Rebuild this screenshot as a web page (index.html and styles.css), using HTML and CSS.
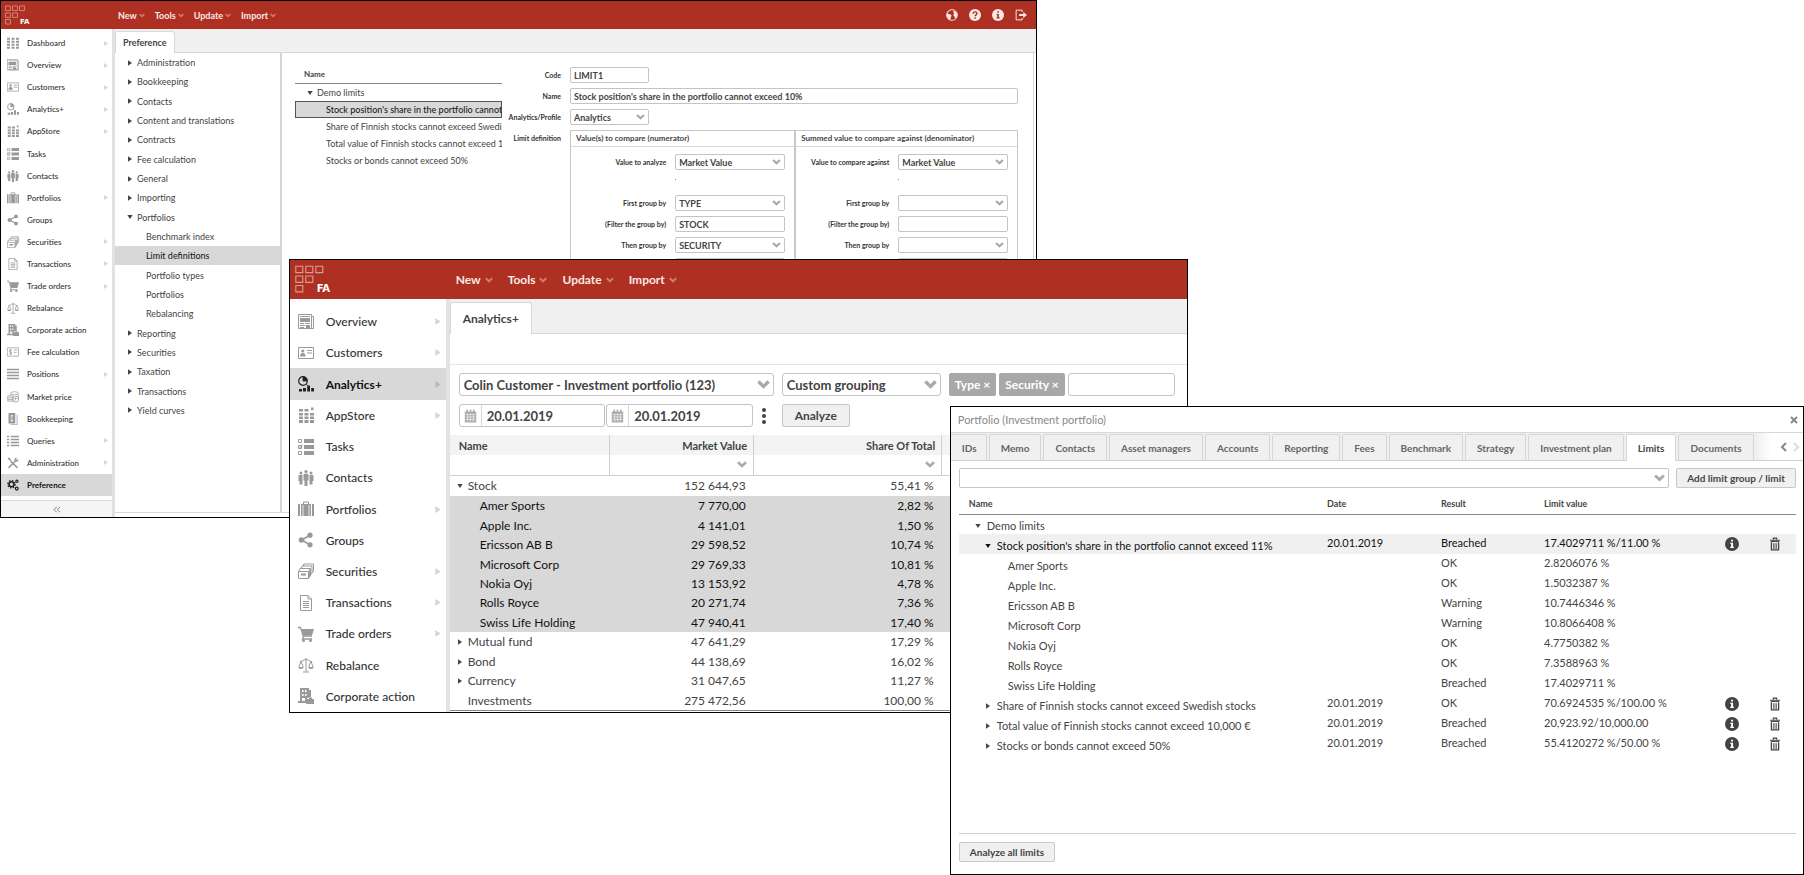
FILE: index.html
```html
<!DOCTYPE html>
<html lang="en">
<head>
<meta charset="utf-8">
<title>FA - Limits</title>
<link rel="stylesheet" href="styles.css">
</head>
<body>
<svg class="sprite" aria-hidden="true">
  <symbol id="chev" viewBox="0 0 10 7"><path d="M1 1.200 5 5l4-3.800" fill="none" stroke="currentColor" stroke-width="2.600"/></symbol>
  <symbol id="right" viewBox="0 0 6 8"><path d="M0 0l6 4-6 4z" fill="currentColor"/></symbol>
  <symbol id="down" viewBox="0 0 8 6"><path d="M0 0h8L4 6z" fill="currentColor"/></symbol>
  <symbol id="logo" viewBox="0 0 30 28"><g fill="none" stroke="currentColor" stroke-width="1.1"><path d="M.8 1.2h7v6.400h-7zM10.800 1.200h7v6.400h-7zM20.800 1.200h7v6.400h-7zM.8 11h7v6.400h-7zM10.800 11h7v6.400h-7zM.8 20.500h7v6.400h-7z"/></g></symbol>
  <symbol id="dashboard" viewBox="0 0 16 16"><path d="M0 1h4v2.500H0zM6 1h4v2.500H6zM12 1h4v2.500h-4zM0 5h4v2.500H0zM6 5h4v2.500H6zM12 5h4v2.500h-4zM0 9h4v2.500H0zM6 9h4v2.500H6zM12 9h4v2.500h-4zM0 13h4v2.500H0zM6 13h4v2.500H6zM12 13h4v2.500h-4z" fill="currentColor"/></symbol>
  <symbol id="overview" viewBox="0 0 16 16"><path d="M.5.500h13v14H.5zM13.500 2.500h2v12h-13" fill="none" stroke="currentColor"/><path d="M2 2h10v1H2zM2 4h10v4H2zM2 9h4v1H2zM7 9h5v1H7zM2 11h5v1H2zM8 11h4v3H8zM2 13h4v1H2z" fill="currentColor"/></symbol>
  <symbol id="customers" viewBox="0 0 16 16"><path d="M.5 2.500h15v11H.5z" fill="none" stroke="currentColor"/><circle cx="4.800" cy="6" r="1.600" fill="currentColor"/><path d="M2 11.500c0-2.500 1-3.500 2.800-3.500s2.800 1 2.800 3.500zM9 5h5v1H9zM9 7.500h5v1H9z" fill="currentColor"/></symbol>
  <symbol id="analytics" viewBox="0 0 16 16"><circle cx="5" cy="5" r="4.300" fill="none" stroke="currentColor" stroke-width="1.200"/><path d="M5 5V1a4 4 0 0 1 4 4zM8 8l3 3" fill="currentColor" stroke="currentColor" stroke-width=".8"/><path d="M1 13h3v2.500H1zM5 12h3v3.500H5zM9.200 9.500H12v6H9.200zM13.200 12H16v3.500h-2.800z" fill="currentColor"/></symbol>
  <symbol id="appstore" viewBox="0 0 16 16"><path d="M1 2h4v2.500H1zM6.500 2h4v2.500h-4zM13 .500h2.500V3H13zM1 6h4v2.500H1zM6.500 6h4v2.500h-4zM12 6h4v2.500h-4zM1 9.500h4V12H1zM6.500 9.500h4V12h-4zM12 9.500h4V12h-4zM1 13h4v3H1zM6.500 13h4v3h-4zM12 13h4v3h-4z" fill="currentColor"/></symbol>
  <symbol id="tasks" viewBox="0 0 16 16"><path d="M.5.500h3v3h-3zM.5 6.500h3v3h-3zM.5 12.500h3v3h-3zM1 7.500l1 1 2.500-3" fill="none" stroke="currentColor"/><path d="M6 0h10v4H6zM6 6h10v4H6zM6 12h10v4H6z" fill="currentColor"/></symbol>
  <symbol id="contacts" viewBox="0 0 16 16"><g fill="currentColor"><circle cx="3" cy="3" r="1.500"/><circle cx="8" cy="1.600" r="1.600"/><circle cx="13" cy="3" r="1.500"/><path d="M.5 6q0-1 1-1h3v9.500h-3V11H.5zM5.500 5q0-1.200 1-1.200h3q1 0 1 1.200v5.500h-1V16h-3v-5.500h-1zM11.500 5h3q1 0 1 1v5h-1v3.500h-3z"/></g></symbol>
  <symbol id="portfolios" viewBox="0 0 16 16"><path d="M0 3h2v12H0zM3 3h10v12H3zM14 3h2v12h-2z" fill="currentColor"/><path d="M5.500 3V1h5v2M5.500 4v10M10.500 4v10" fill="none" stroke="currentColor"/><path d="M5 4v11M11 4v11" stroke="#fff" stroke-width=".8"/></symbol>
  <symbol id="groups" viewBox="0 0 16 16"><g fill="currentColor"><circle cx="3.500" cy="8" r="2.800"/><circle cx="12" cy="3.200" r="2.600"/><circle cx="12" cy="12.800" r="2.600"/></g><path d="M12 3.200 3.500 8l8.500 4.800" fill="none" stroke="currentColor" stroke-width="1.600"/></symbol>
  <symbol id="securities" viewBox="0 0 16 16"><g fill="none" stroke="currentColor"><path d="M.5 8.500h10v7H.5zM.5 8.500 2 5.500h10.500l-2 3M12.500 5.500v7l-2 3M3 5.500l1-2.500h10v7l-1.500 2M5 3l.8-2H15.500v7L14 10"/></g><path d="M3 10.500h5v2H3zM11 9l1.500-3v6L11 15z" fill="currentColor"/></symbol>
  <symbol id="transactions" viewBox="0 0 16 16"><path d="M2.500.500h7.500l3.500 3.500v11.500h-11zM10 .500V4h3.500M5 6.500h6M5 8.500h6M5 10.500h6M5 12.500h6" fill="none" stroke="currentColor"/></symbol>
  <symbol id="cart" viewBox="0 0 16 16"><path d="M0 1.500h2.500l3 9.500-1 2H14M5 10h9" fill="none" stroke="currentColor" stroke-width="1.300"/><path d="M3.500 3H16l-2 6.500H5.500z" fill="currentColor"/><circle cx="5.500" cy="14.500" r="1.500" fill="currentColor"/><circle cx="12.500" cy="14.500" r="1.500" fill="currentColor"/></symbol>
  <symbol id="rebalance" viewBox="0 0 16 16"><path d="M8 1v13.500M5 15h6M2 4.500c3 0 3-2 6-2s3 2 6 2M3 4.500.8 10M3 4.500 5.300 10M13 4.500 10.700 10M13 4.500l2.200 5.500" fill="none" stroke="currentColor"/><path d="M.3 10h5.400a2.700 2 0 0 1-5.400 0zM10.300 10h5.400a2.700 2 0 0 1-5.400 0z" fill="currentColor"/></symbol>
  <symbol id="corporate" viewBox="0 0 16 16"><path fill-rule="evenodd" d="M2 0h9v2h2v7h-2v1H9v5H0v-2h2zM4 2v2h1.500V2zM7 2v2h1.500V2zM4 6v2h1.500V6zM7 6v2h1.500V6zM4 10v3h3v-3z" fill="currentColor"/><path d="M9 11h7v5H8v-5zM11 9.500h3v2h-3z" fill="currentColor"/></symbol>
  <symbol id="fee" viewBox="0 0 16 16"><path d="M.5 2.500h15v11H.5zM9 5.500h5M9 8.500h4M6.500 5.500H4Q3 5.500 3 6.700T4.500 8t2 1.200-1.500 1.300H3M4.800 4v8" fill="none" stroke="currentColor"/></symbol>
  <symbol id="positions" viewBox="0 0 16 16"><path d="M0 1h16v2H0zM0 5h16v2H0zM0 9h16v2H0zM0 13h16v2H0z" fill="currentColor"/></symbol>
  <symbol id="market" viewBox="0 0 16 16"><g fill="none" stroke="currentColor"><ellipse cx="10" cy="3" rx="5" ry="2"/><path d="M5 3v3M15 3v9M1 6.500h7v7H1zM1 9h7M1 11.500h7"/><circle cx="11.500" cy="11" r="4"/><path d="M11.500 8.500V13M10 10h3"/></g></symbol>
  <symbol id="book" viewBox="0 0 16 16"><path fill-rule="evenodd" d="M2 0h9v14H2zM5 3v1.500h3V3zM5 6v1.200h2V6zM5 9v2h3V9z" fill="currentColor"/><path d="M13.500 2v13.500H5" fill="none" stroke="currentColor"/></symbol>
  <symbol id="queries" viewBox="0 0 16 16"><path d="M0 1h3v2H0zM5 1h11v2H5zM0 5h3v2H0zM5 5h11v2H5zM0 9h3v2H0zM5 9h11v2H5zM0 13h3v2H0zM5 13h11v2H5z" fill="currentColor"/></symbol>
  <symbol id="admin" viewBox="0 0 16 16"><path d="M4.500 5 14 14.500M10.500 6 2 14.500" stroke="currentColor" stroke-width="2"/><path d="M1 1.500l2-.8 2.500 3-1.200 1.500L1.500 3zM10 5.500c-1-2.500 1-5 3.500-4.800L12 2.500l1.500 1.500L15.500 2.500C16 5 13.500 7 11 6.500z" fill="currentColor"/></symbol>
  <symbol id="gears" viewBox="0 0 16 16"><g fill="none" stroke="currentColor"><circle cx="6" cy="7" r="3.300" stroke-width="2.200"/><circle cx="6" cy="7" r="5" stroke-width="1.600" stroke-dasharray="2 1.920"/><circle cx="13.200" cy="3" r="1.500" stroke-width="1.500"/><circle cx="13" cy="12.800" r="1.900" stroke-width="1.600"/></g></symbol>
  <symbol id="globe" viewBox="0 0 16 16"><circle cx="8" cy="8" r="7.200" fill="none" stroke="currentColor" stroke-width="1.200"/><path d="M7 1 4.500 2.500 2 6l1.500 1L5 6.500 7.500 8.500 6.500 11 5.500 15C2.500 14 1 11 1 8s2-6.500 6-7zM10 2l4 2.500 1 3.500-1 3.500-2 1-1-3-1.500-1.500L11 5.500 9.500 4z" fill="currentColor"/></symbol>
  <symbol id="help" viewBox="0 0 16 16"><circle cx="8" cy="8" r="8" fill="currentColor"/><path d="M5.500 6.300C5.500 3 10.600 3 10.600 6c0 1.800-2.500 1.900-2.500 3.800M8.100 11v2" fill="none" stroke="#ae3022" stroke-width="1.900"/></symbol>
  <symbol id="info" viewBox="0 0 16 16"><circle cx="8" cy="8" r="8" fill="currentColor"/><path d="M7 3h2.200v2H7zM6 6.500h3.200V11h1v1.500H6V11h1V8H6z" class="cutout"/></symbol>
  <symbol id="logout" viewBox="0 0 16 16"><path d="M9.500 4V1.500h-8v13h8V12" fill="none" stroke="currentColor" stroke-width="1.300"/><path d="M5.500 6.800H11V4l5 4-5 4V9.200H5.500z" fill="currentColor"/></symbol>
  <symbol id="calendar" viewBox="0 0 16 16"><path d="M1 2.500h14V16H1z" fill="currentColor"/><path d="M4 0v4M12 0v4M8 0v3" stroke="currentColor" stroke-width="1.800"/><path d="M2 6.200h12M2 9.200h12M2 12.200h12M4.500 5v10M8 5v10M11.500 5v10" stroke="#fff" stroke-width=".7"/></symbol>
  <symbol id="trash" viewBox="0 0 12 16"><path d="M4 2.500V1h4v1.500M0 3.500h12M1 5h10" fill="none" stroke="currentColor" stroke-width="1.400"/><path d="M1.700 6v9h8.600V6" fill="none" stroke="currentColor" stroke-width="1.600"/><path d="M4.300 7v7M6 7v7M7.700 7v7" stroke="currentColor" stroke-width=".9"/></symbol>
</svg>
<main class="desktop">

<section class="window win-pref" aria-label="Preference">
  <header class="topbar">
    <div class="logo"><svg><use href="#logo"/></svg><span>FA</span></div>
    <nav class="menu">
      <button>New<svg><use href="#chev"/></svg></button><button>Tools<svg><use href="#chev"/></svg></button><button>Update<svg><use href="#chev"/></svg></button><button>Import<svg><use href="#chev"/></svg></button>
    </nav>
    <div class="actions">
      <button aria-label="Language"><svg><use href="#globe"/></svg></button><button aria-label="Help"><svg><use href="#help"/></svg></button><button aria-label="Info"><svg><use href="#info"/></svg></button><button aria-label="Log out"><svg><use href="#logout"/></svg></button>
    </div>
  </header>
  <div class="body">
    <aside class="sidebar">
      <ul>
        <li><svg class="ico"><use href="#dashboard"/></svg><a href="#">Dashboard</a><svg class="more"><use href="#right"/></svg></li>
        <li><svg class="ico"><use href="#overview"/></svg><a href="#">Overview</a><svg class="more"><use href="#right"/></svg></li>
        <li><svg class="ico"><use href="#customers"/></svg><a href="#">Customers</a><svg class="more"><use href="#right"/></svg></li>
        <li><svg class="ico"><use href="#analytics"/></svg><a href="#">Analytics+</a><svg class="more"><use href="#right"/></svg></li>
        <li><svg class="ico"><use href="#appstore"/></svg><a href="#">AppStore</a><svg class="more"><use href="#right"/></svg></li>
        <li><svg class="ico"><use href="#tasks"/></svg><a href="#">Tasks</a></li>
        <li><svg class="ico"><use href="#contacts"/></svg><a href="#">Contacts</a></li>
        <li><svg class="ico"><use href="#portfolios"/></svg><a href="#">Portfolios</a><svg class="more"><use href="#right"/></svg></li>
        <li><svg class="ico"><use href="#groups"/></svg><a href="#">Groups</a></li>
        <li><svg class="ico"><use href="#securities"/></svg><a href="#">Securities</a><svg class="more"><use href="#right"/></svg></li>
        <li><svg class="ico"><use href="#transactions"/></svg><a href="#">Transactions</a><svg class="more"><use href="#right"/></svg></li>
        <li><svg class="ico"><use href="#cart"/></svg><a href="#">Trade orders</a><svg class="more"><use href="#right"/></svg></li>
        <li><svg class="ico"><use href="#rebalance"/></svg><a href="#">Rebalance</a></li>
        <li><svg class="ico"><use href="#corporate"/></svg><a href="#">Corporate action</a></li>
        <li><svg class="ico"><use href="#fee"/></svg><a href="#">Fee calculation</a></li>
        <li><svg class="ico"><use href="#positions"/></svg><a href="#">Positions</a><svg class="more"><use href="#right"/></svg></li>
        <li><svg class="ico"><use href="#market"/></svg><a href="#">Market price</a></li>
        <li><svg class="ico"><use href="#book"/></svg><a href="#">Bookkeeping</a></li>
        <li><svg class="ico"><use href="#queries"/></svg><a href="#">Queries</a><svg class="more"><use href="#right"/></svg></li>
        <li><svg class="ico"><use href="#admin"/></svg><a href="#">Administration</a><svg class="more"><use href="#right"/></svg></li>
        <li class="on"><svg class="ico"><use href="#gears"/></svg><a href="#">Preference</a></li>
      </ul>
      <button class="collapse" aria-label="Collapse menu"><svg viewBox="0 0 12 10"><path d="M5.500 1 1.500 5l4 4M10.500 1l-4 4 4 4" fill="none" stroke="currentColor" stroke-width="1.400"/></svg></button>
    </aside>
    <div class="content">
      <div class="tabbar"><button class="tab on">Preference</button></div>
      <div class="panes">
        <ul class="tree">
          <li><svg class="tri r"><use href="#right"/></svg>Administration</li>
          <li><svg class="tri r"><use href="#right"/></svg>Bookkeeping</li>
          <li><svg class="tri r"><use href="#right"/></svg>Contacts</li>
          <li><svg class="tri r"><use href="#right"/></svg>Content and translations</li>
          <li><svg class="tri r"><use href="#right"/></svg>Contracts</li>
          <li><svg class="tri r"><use href="#right"/></svg>Fee calculation</li>
          <li><svg class="tri r"><use href="#right"/></svg>General</li>
          <li><svg class="tri r"><use href="#right"/></svg>Importing</li>
          <li><svg class="tri d"><use href="#down"/></svg>Portfolios</li>
          <li class="sub">Benchmark index</li>
          <li class="sub on">Limit definitions</li>
          <li class="sub">Portfolio types</li>
          <li class="sub">Portfolios</li>
          <li class="sub">Rebalancing</li>
          <li><svg class="tri r"><use href="#right"/></svg>Reporting</li>
          <li><svg class="tri r"><use href="#right"/></svg>Securities</li>
          <li><svg class="tri r"><use href="#right"/></svg>Taxation</li>
          <li><svg class="tri r"><use href="#right"/></svg>Transactions</li>
          <li><svg class="tri r"><use href="#right"/></svg>Yield curves</li>
        </ul>
        <div class="editor">
          <div class="limits">
            <h2>Name</h2>
            <ul>
              <li class="group"><svg class="tri d"><use href="#down"/></svg>Demo limits</li>
              <li class="on">Stock position's share in the portfolio cannot exceed 10%</li>
              <li>Share of Finnish stocks cannot exceed Swedish stocks</li>
              <li>Total value of Finnish stocks cannot exceed 10,000 €</li>
              <li>Stocks or bonds cannot exceed 50%</li>
            </ul>
          </div>
          <form class="form">
            <label for="code">Code</label><input id="code" class="field short" value="LIMIT1">
            <label for="name">Name</label><input id="name" class="field" value="Stock position's share in the portfolio cannot exceed 10%">
            <label for="prof">Analytics/Profile</label>
            <div class="select short"><select id="prof" class="field"><option>Analytics</option></select><svg><use href="#chev"/></svg></div>
            <span class="lab">Limit definition</span>
            <div class="compare">
              <fieldset>
                <h3>Value(s) to compare (numerator)</h3>
                <div class="pairs">
                  <label for="a1">Value to analyze</label><div class="select"><select id="a1" class="field"><option>Market Value</option></select><svg><use href="#chev"/></svg></div>
                  <i class="dot"></i>
                  <label for="a2">First group by</label><div class="select"><select id="a2" class="field"><option>TYPE</option></select><svg><use href="#chev"/></svg></div>
                  <label for="a3">(Filter the group by)</label><input id="a3" class="field" value="STOCK">
                  <label for="a4">Then group by</label><div class="select"><select id="a4" class="field"><option>SECURITY</option></select><svg><use href="#chev"/></svg></div>
                  <span></span><input class="field" aria-label="Filter">
                </div>
              </fieldset>
              <fieldset>
                <h3>Summed value to compare against (denominator)</h3>
                <div class="pairs">
                  <label for="b1">Value to compare against</label><div class="select"><select id="b1" class="field"><option>Market Value</option></select><svg><use href="#chev"/></svg></div>
                  <i class="dot"></i>
                  <label for="b2">First group by</label><div class="select"><select id="b2" class="field"><option></option></select><svg><use href="#chev"/></svg></div>
                  <label for="b3">(Filter the group by)</label><input id="b3" class="field">
                  <label for="b4">Then group by</label><div class="select"><select id="b4" class="field"><option></option></select><svg><use href="#chev"/></svg></div>
                  <span></span><input class="field" aria-label="Filter">
                </div>
              </fieldset>
            </div>
          </form>
        </div>
      </div>
    </div>
  </div>
</section>

<section class="window win-ana" aria-label="Analytics">
  <header class="topbar">
    <div class="logo"><svg><use href="#logo"/></svg><span>FA</span></div>
    <nav class="menu">
      <button>New<svg><use href="#chev"/></svg></button><button>Tools<svg><use href="#chev"/></svg></button><button>Update<svg><use href="#chev"/></svg></button><button>Import<svg><use href="#chev"/></svg></button>
    </nav>
  </header>
  <div class="body">
    <aside class="sidebar">
      <ul>
        <li><svg class="ico"><use href="#overview"/></svg><a href="#">Overview</a><svg class="more"><use href="#right"/></svg></li>
        <li><svg class="ico"><use href="#customers"/></svg><a href="#">Customers</a><svg class="more"><use href="#right"/></svg></li>
        <li class="on"><svg class="ico"><use href="#analytics"/></svg><a href="#">Analytics+</a><svg class="more"><use href="#right"/></svg></li>
        <li><svg class="ico"><use href="#appstore"/></svg><a href="#">AppStore</a><svg class="more"><use href="#right"/></svg></li>
        <li><svg class="ico"><use href="#tasks"/></svg><a href="#">Tasks</a></li>
        <li><svg class="ico"><use href="#contacts"/></svg><a href="#">Contacts</a></li>
        <li><svg class="ico"><use href="#portfolios"/></svg><a href="#">Portfolios</a><svg class="more"><use href="#right"/></svg></li>
        <li><svg class="ico"><use href="#groups"/></svg><a href="#">Groups</a></li>
        <li><svg class="ico"><use href="#securities"/></svg><a href="#">Securities</a><svg class="more"><use href="#right"/></svg></li>
        <li><svg class="ico"><use href="#transactions"/></svg><a href="#">Transactions</a><svg class="more"><use href="#right"/></svg></li>
        <li><svg class="ico"><use href="#cart"/></svg><a href="#">Trade orders</a><svg class="more"><use href="#right"/></svg></li>
        <li><svg class="ico"><use href="#rebalance"/></svg><a href="#">Rebalance</a></li>
        <li><svg class="ico"><use href="#corporate"/></svg><a href="#">Corporate action</a></li>
      </ul>
    </aside>
    <div class="content">
      <div class="tabbar"><button class="tab on">Analytics+</button></div>
      <div class="spacer"></div>
      <div class="controls">
        <div class="line">
          <div class="select portfolio"><select class="field" aria-label="Portfolio"><option>Colin Customer - Investment portfolio (123)</option></select><svg><use href="#chev"/></svg></div>
          <div class="select grouping"><select class="field" aria-label="Grouping"><option>Custom grouping</option></select><svg><use href="#chev"/></svg></div>
          <div class="tokens"><button>Type ×</button><button>Security ×</button><input class="field" aria-label="Add group"></div>
        </div>
        <div class="line">
          <div class="dates">
            <div class="date"><svg><use href="#calendar"/></svg><input aria-label="From" value="20.01.2019"></div>
            <div class="date"><svg><use href="#calendar"/></svg><input aria-label="To" value="20.01.2019"></div>
            <button class="kebab" aria-label="More options"><svg viewBox="0 0 4 16"><circle cx="2" cy="2" r="2"/><circle cx="2" cy="8" r="2"/><circle cx="2" cy="14" r="2"/></svg></button>
          </div>
          <button class="btn">Analyze</button>
        </div>
      </div>
      <table class="grid">
        <colgroup><col class="c1"><col class="c2"><col class="c3"><col></colgroup>
        <thead>
          <tr><th>Name</th><th class="num">Market Value</th><th class="num">Share Of Total</th><th></th></tr>
          <tr class="filter"><td></td><td class="num"><svg><use href="#chev"/></svg></td><td class="num"><svg><use href="#chev"/></svg></td><td></td></tr>
        </thead>
        <tbody>
          <tr class="first"><td><svg class="tri d"><use href="#down"/></svg>Stock</td><td class="num">152 644,93</td><td class="num">55,41 %</td><td></td></tr>
          <tr class="hl"><td class="sub">Amer Sports</td><td class="num">7 770,00</td><td class="num">2,82 %</td><td></td></tr>
          <tr class="hl"><td class="sub">Apple Inc.</td><td class="num">4 141,01</td><td class="num">1,50 %</td><td></td></tr>
          <tr class="hl"><td class="sub">Ericsson AB B</td><td class="num">29 598,52</td><td class="num">10,74 %</td><td></td></tr>
          <tr class="hl"><td class="sub">Microsoft Corp</td><td class="num">29 769,33</td><td class="num">10,81 %</td><td></td></tr>
          <tr class="hl"><td class="sub">Nokia Oyj</td><td class="num">13 153,92</td><td class="num">4,78 %</td><td></td></tr>
          <tr class="hl"><td class="sub">Rolls Royce</td><td class="num">20 271,74</td><td class="num">7,36 %</td><td></td></tr>
          <tr class="hl"><td class="sub">Swiss Life Holding</td><td class="num">47 940,41</td><td class="num">17,40 %</td><td></td></tr>
          <tr><td><svg class="tri r"><use href="#right"/></svg>Mutual fund</td><td class="num">47 641,29</td><td class="num">17,29 %</td><td></td></tr>
          <tr><td><svg class="tri r"><use href="#right"/></svg>Bond</td><td class="num">44 138,69</td><td class="num">16,02 %</td><td></td></tr>
          <tr><td><svg class="tri r"><use href="#right"/></svg>Currency</td><td class="num">31 047,65</td><td class="num">11,27 %</td><td></td></tr>
          <tr><td class="total">Investments</td><td class="num">275 472,56</td><td class="num">100,00 %</td><td></td></tr>
        </tbody>
      </table>
    </div>
  </div>
</section>

<section class="window win-port" aria-label="Portfolio">
  <header class="title"><h1>Portfolio (Investment portfolio)</h1><button aria-label="Close"><svg viewBox="0 0 8 8"><path d="M1 1l6 6M7 1 1 7" stroke="currentColor" stroke-width="2"/></svg></button></header>
  <div class="tabs">
    <button>IDs</button><button>Memo</button><button>Contacts</button><button>Asset managers</button><button>Accounts</button><button>Reporting</button><button>Fees</button><button>Benchmark</button><button>Strategy</button><button>Investment plan</button><button class="on">Limits</button><button>Documents</button>
    <div class="scroll"><button aria-label="Previous tabs"><svg viewBox="0 0 7 10"><path d="M6 1 2 5l4 4" fill="none" stroke="#888" stroke-width="2"/></svg></button><button aria-label="Next tabs"><svg viewBox="0 0 7 10"><path d="M1 1l4 4-4 4" fill="none" stroke="#ddd" stroke-width="2"/></svg></button></div>
  </div>
  <div class="pane">
    <div class="add">
      <div class="select"><select class="field" aria-label="Limit"><option></option></select><svg><use href="#chev"/></svg></div>
      <button class="btn">Add limit group / limit</button>
    </div>
    <table class="results">
      <colgroup><col><col class="day"><col class="res"><col class="val"><col class="act"><col class="act"></colgroup>
      <thead><tr><th>Name</th><th>Date</th><th>Result</th><th>Limit value</th><th></th><th></th></tr></thead>
      <tbody>
        <tr><td class="name l0"><svg class="tri d"><use href="#down"/></svg>Demo limits</td><td></td><td></td><td></td><td></td><td></td></tr>
        <tr class="hl"><td class="name l1"><svg class="tri d"><use href="#down"/></svg>Stock position's share in the portfolio cannot exceed 11%</td><td>20.01.2019</td><td>Breached</td><td>17.4029711 %/11.00 %</td><td class="icon"><button aria-label="Info"><svg class="inf"><use href="#info"/></svg></button></td><td class="icon"><button aria-label="Delete"><svg class="tra"><use href="#trash"/></svg></button></td></tr>
        <tr><td class="name l2">Amer Sports</td><td></td><td>OK</td><td>2.8206076 %</td><td></td><td></td></tr>
        <tr><td class="name l2">Apple Inc.</td><td></td><td>OK</td><td>1.5032387 %</td><td></td><td></td></tr>
        <tr><td class="name l2">Ericsson AB B</td><td></td><td>Warning</td><td>10.7446346 %</td><td></td><td></td></tr>
        <tr><td class="name l2">Microsoft Corp</td><td></td><td>Warning</td><td>10.8066408 %</td><td></td><td></td></tr>
        <tr><td class="name l2">Nokia Oyj</td><td></td><td>OK</td><td>4.7750382 %</td><td></td><td></td></tr>
        <tr><td class="name l2">Rolls Royce</td><td></td><td>OK</td><td>7.3588963 %</td><td></td><td></td></tr>
        <tr><td class="name l2">Swiss Life Holding</td><td></td><td>Breached</td><td>17.4029711 %</td><td></td><td></td></tr>
        <tr><td class="name l1"><svg class="tri r"><use href="#right"/></svg>Share of Finnish stocks cannot exceed Swedish stocks</td><td>20.01.2019</td><td>OK</td><td>70.6924535 %/100.00 %</td><td class="icon"><button aria-label="Info"><svg class="inf"><use href="#info"/></svg></button></td><td class="icon"><button aria-label="Delete"><svg class="tra"><use href="#trash"/></svg></button></td></tr>
        <tr><td class="name l1"><svg class="tri r"><use href="#right"/></svg>Total value of Finnish stocks cannot exceed 10,000 €</td><td>20.01.2019</td><td>Breached</td><td>20,923.92/10,000.00</td><td class="icon"><button aria-label="Info"><svg class="inf"><use href="#info"/></svg></button></td><td class="icon"><button aria-label="Delete"><svg class="tra"><use href="#trash"/></svg></button></td></tr>
        <tr><td class="name l1"><svg class="tri r"><use href="#right"/></svg>Stocks or bonds cannot exceed 50%</td><td>20.01.2019</td><td>Breached</td><td>55.4120272 %/50.00 %</td><td class="icon"><button aria-label="Info"><svg class="inf"><use href="#info"/></svg></button></td><td class="icon"><button aria-label="Delete"><svg class="tra"><use href="#trash"/></svg></button></td></tr>
      </tbody>
    </table>
    <footer><button class="btn">Analyze all limits</button></footer>
  </div>
</section>
</main>
</body>
</html>
```
FILE: styles.css
```css
* { box-sizing: border-box; }
body { margin: 0; background: #fff; font-family: Lato, "Liberation Sans", sans-serif; color: #444; }
ul { list-style: none; margin: 0; padding: 0; }
h1, h2, h3 { margin: 0; }
a { color: inherit; text-decoration: none; }
button, input, select { font: inherit; color: inherit; margin: 0; }
button { padding: 0; border: 0; background: none; }
svg { display: block; flex: none; }
.sprite { position: absolute; width: 0; height: 0; }
.cutout { fill: var(--cut, #fff); }

/* Overlapping windows */
.desktop { position: relative; min-height: 100vh; overflow: hidden; }
.window { position: absolute; display: flex; flex-direction: column; background: #fff; border: 1px solid #000; overflow: hidden; }
.win-pref { left: 0; top: 0; width: 57.5%; height: 518px; font-size: 9px; }
.win-ana { left: 16%; top: 259px; width: 49.85%; height: 454px; font-size: 12px; }
.win-port { right: 0; top: 406px; width: 47.35%; height: 469px; font-size: 11px; }

/* Top bar */
.topbar { --cut: #ae3022; display: flex; align-items: center; background: #ae3022; color: #fbe9e6; }
.logo { display: grid; align-self: stretch; }
.logo svg, .logo span { grid-area: 1 / 1; }
.logo svg { color: #dc9a92; }
.logo span { align-self: end; font-family: "DejaVu Sans", sans-serif; font-weight: 700; line-height: 1; color: #fff; }
.menu { display: flex; font-weight: 700; }
.menu button { display: flex; align-items: center; }
.menu svg { color: #cf7a70; }
.actions { display: flex; gap: 11px; margin-left: auto; padding-right: 9px; }
.actions svg { width: 12px; height: 12px; }
.win-pref .topbar { height: 28px; }
.win-pref .logo { width: 117px; padding: 4px 0 3px 4px; }
.win-pref .logo svg { width: 21px; height: 20px; }
.win-pref .logo span { padding-left: 15px; font-size: 7px; }
.win-pref .menu { gap: 10px; }
.win-pref .menu button { gap: 2px; }
.win-pref .menu svg { width: 6px; height: 5px; }
.win-ana .topbar { height: 39px; }
.win-ana .logo { width: 166px; padding: 5px 0 5px 5px; }
.win-ana .logo svg { width: 30px; height: 28px; }
.win-ana .logo span { padding-left: 22px; font-size: 10px; }
.win-ana .menu { gap: 15px; }
.win-ana .menu button { gap: 4px; }
.win-ana .menu svg { width: 8px; height: 6px; }

/* Layout */
.body { display: flex; flex: 1; min-height: 0; }
.content { display: flex; flex-direction: column; flex: 1; min-width: 0; }
.sidebar { display: flex; flex-direction: column; flex: none; color: #333; font-weight: 500; }
.sidebar ul { display: flex; flex-direction: column; flex: 1; }
.sidebar li { display: flex; align-items: center; flex: 1; }
.sidebar .ico { color: #999; }
.sidebar .more { margin-left: auto; color: #d5d5d5; }
.sidebar .on { background: #d8d8d8; color: #111; font-weight: 700; }
.sidebar .on .ico { color: #222; }
.sidebar .on .more { color: #b8b8b8; }
.win-pref .sidebar { width: 114px; border-right: 3px solid #e2e2e2; font-size: 8px; }
.win-pref .sidebar ul { padding: 3px 0 4px; }
.win-pref .sidebar li { gap: 8px; padding: 0 4px 0 6px; }
.win-pref .ico { width: 12px; height: 12px; }
.win-pref .more { width: 4px; height: 5px; }
.win-ana .sidebar { width: 160px; border-right: 4px solid #e2e2e2; }
.win-ana .sidebar ul { padding-top: 7px; }
.win-ana .sidebar li { gap: 12px; padding: 0 5px 0 8px; }
.win-ana .ico { width: 16px; height: 16px; }
.win-ana .more { width: 6px; height: 7px; }
.collapse { display: flex; justify-content: center; align-items: center; height: 17px; background: #f5f5f5; border-top: 1px solid #d8d8d8; color: #777; }
.collapse svg { width: 8px; height: 7px; }

/* Tab bar with a single open tab */
.tabbar { display: flex; align-items: flex-end; background: #f0f0f0; border-bottom: 1px solid #d8d8d8; }
.tab { background: #fff; border: 1px solid #d8d8d8; border-bottom: 0; border-radius: 3px 3px 0 0; margin-bottom: -1px; font-weight: 700; }
.win-pref .tabbar { height: 24px; }
.win-pref .tab { height: 22px; padding: 0 7px; }
.win-ana .tabbar { height: 35px; }
.win-ana .tab { height: 32px; padding: 0 12px; }

/* Fields */
.field { width: 100%; min-width: 0; padding: 0 3px; border: 1px solid #c4c4c4; border-radius: 2px; background: #fff; font-weight: 700; appearance: none; }
.select { display: grid; align-items: center; }
.select .field, .select svg { grid-area: 1 / 1; }
.select svg { justify-self: end; pointer-events: none; color: #aaa; }
.btn { border: 1px solid #c8c8c8; border-radius: 2px; background: #f0f0f0; font-weight: 700; }
.tri.r { width: 4px; height: 6px; }
.tri.d { width: 6px; height: 4px; }

/* Preference window */
.panes { display: flex; flex: 1; min-height: 0; margin: 0 2px 4px 0; border: solid #d8d8d8; border-width: 0 1px 1px 0; }
.tree { display: grid; grid-auto-rows: 1fr; align-self: flex-start; flex: none; width: 165px; height: 367px; }
.tree li { display: flex; align-items: center; gap: 5px; padding-left: 13px; }
.tree .d { margin: 0 -1px; }
.tree .sub { padding-left: 31px; }
.tree .on { background: #d8d8d8; color: #111; }
.editor { display: flex; flex: 1; min-width: 0; border-left: 2px solid #d5d5d5; padding: 13px 15px 0 13px; }
.limits { width: 207px; flex: none; overflow: hidden; }
.limits h2 { height: 18px; padding-left: 9px; border-bottom: 1px solid #888; font-size: 8px; line-height: 17px; }
.limits li { height: 17px; line-height: 15px; padding-left: 30px; border: 1px solid transparent; white-space: nowrap; }
.limits .group { display: flex; align-items: center; gap: 4px; padding-left: 11px; }
.limits .on { border: 1px solid #555; background: #d8d8d8; color: #222; font-weight: 500; }
.form { display: grid; grid-template-columns: 59px 1fr; column-gap: 9px; row-gap: 5px; flex: 1; min-width: 0; align-content: start; padding-top: 1px; font-size: 7px; font-weight: 700; color: #333; }
.form label, .lab { text-align: right; line-height: 16px; white-space: nowrap; }
.form .field { height: 16px; font-size: 9px; color: #444; }
.form .select svg { width: 9px; height: 6px; margin-right: 4px; }
.form .short { width: 79px; }
.compare { display: grid; grid-template-columns: 1fr 1fr; border: 1px solid #c8c8c8; border-bottom: 0; }
fieldset { margin: 0; padding: 0; border: 0; min-width: 0; }
fieldset + fieldset { border-left: 2px solid #c8c8c8; }
h3 { height: 16px; padding-left: 5px; border-bottom: 1px solid #d8d8d8; font-size: 8px; line-height: 15px; color: #444; }
.pairs { display: grid; grid-template-columns: 1fr 110px; gap: 5px 9px; padding: 7px 9px 0 0; }
.dot { grid-column: 2; width: 1px; height: 1px; margin: 4px 0 10px; background: #888; }

/* Analytics window */
.spacer { height: 31px; border-bottom: 1px solid #e5e5e5; }
.controls { display: flex; flex-direction: column; gap: 8px; padding: 8px 12px 8px 9px; }
.line { display: flex; gap: 8px; }
.controls .field { height: 23px; padding: 0 4px; border-radius: 3px; font-size: 13px; }
.controls .select svg { width: 13px; height: 9px; margin-right: 4px; }
.portfolio, .dates { width: 315px; flex: none; }
.grouping { width: 159px; flex: none; }
.tokens { display: flex; flex: 1; gap: 3px; min-width: 0; }
.tokens button { flex: none; padding: 0 6px; border-radius: 2px; background: #a8a8a8; color: #fff; font-weight: 700; white-space: nowrap; }
.tokens .field { flex: 1; }
.dates { display: flex; gap: 1px; }
.date { display: flex; align-items: center; flex: 1; height: 23px; border: 1px solid #c4c4c4; border-radius: 3px; min-width: 0; }
.date svg { width: 13px; height: 14px; margin: 0 4px; color: #aaa; }
.date input { flex: 1; align-self: stretch; min-width: 0; padding: 0 5px; border: 0; border-left: 1px solid #d8d8d8; background: none; font-size: 13px; font-weight: 700; }
.kebab { width: 20px; padding-left: 8px; fill: #444; }
.kebab svg { width: 4px; height: 16px; }
.controls .btn { padding: 0 12px; }
.grid { width: 100%; border-collapse: collapse; table-layout: fixed; border-bottom: 1px solid #888; height: 276px; }
.grid .c1 { width: 160px; }
.grid .c2 { width: 144px; }
.grid .c3 { width: 188px; }
.grid th, .grid td { padding: 0 8px 0 3px; text-align: left; white-space: nowrap; }
.grid th { height: 20px; padding: 0 6px 0 9px; background: #f3f3f3; font-size: 11px; }
.grid .filter td { height: 20px; padding-right: 6px; border-bottom: 1px solid #d0d0d0; }
.grid thead th + th, .grid thead td + td { border-left: 1px solid #d0d0d0; }
.grid .filter svg { width: 10px; height: 7px; margin-left: auto; color: #aaa; }
.grid .num { text-align: right; }
.grid td { line-height: 19px; }
.grid .first td { height: 21px; }
.grid .tri { display: inline-block; margin: 0 6px 1px 5px; }
.grid .tri.d { margin: 0 5px 2px 4px; }
.grid td.sub { padding-left: 30px; }
.grid td.total { padding-left: 18px; }
.grid .hl { background: #d8d8d8; color: #111; }

/* Portfolio window */
.title { display: flex; align-items: center; justify-content: space-between; height: 25px; padding: 0 5px 0 7px; color: #888; }
.title h1 { font-size: 11px; font-weight: 400; }
.title svg { width: 8px; height: 8px; color: #888; }
.tabs { display: flex; gap: 2px; height: 29px; background: #f0f0f0; border-top: 1px solid #d8d8d8; border-bottom: 1px solid #d0d0d0; font-size: 10px; font-weight: 700; color: #666; }
.tabs > button { flex: none; margin-top: 1px; padding: 0 11px; border: 1px solid #d5d5d5; border-bottom: 0; border-radius: 2px 2px 0 0; background: #f0f0f0; white-space: nowrap; }
.tabs > button:first-child { padding: 0 9px 0 11px; border-left: 0; }
.tabs > button.on { margin-bottom: -1px; background: #fff; color: #444; }
.scroll { display: flex; align-items: center; gap: 6px; margin-left: auto; padding: 0 6px 0 24px; background: linear-gradient(90deg, #f0f0f0, #fff 16px); }
.scroll svg { width: 7px; height: 10px; }
.pane { display: flex; flex-direction: column; flex: 1; padding: 7px 7px 12px 8px; }
.add { display: flex; gap: 7px; height: 20px; }
.add .select { flex: 1; }
.add .field { height: 20px; }
.add svg { width: 11px; height: 8px; margin-right: 4px; }
.pane .btn { height: 20px; padding: 0 10px; font-size: 10px; }
.results { width: 100%; height: 260px; margin-top: 6px; border-collapse: collapse; table-layout: fixed; }
.results .day { width: 114px; }
.results .res { width: 103px; }
.results .val { width: 166px; }
.results .act { width: 43px; }
.results th { height: 20px; padding: 0; border-bottom: 1px solid #888; text-align: left; font-size: 9px; white-space: nowrap; }
.results th:first-child { padding-left: 10px; }
.results td { height: 19px; padding: 0 0 2px; line-height: 16px; white-space: nowrap; }
.results .name { padding: 3px 0 0; }
.results .tri { display: inline-block; margin: 0 6px 2px 0; }
.results .tri.r { margin: 0 7px 1px 1px; }
.results .l0 { padding-left: 16px; }
.results .l1 { padding-left: 26px; }
.results .l2 { padding-left: 49px; }
.results .hl { background: #f0f0f0; color: #111; }
.results .icon { padding: 0; }
.results .icon button { display: flex; justify-content: center; width: 100%; }
.results .icon svg { color: #444; }
.results .inf { width: 14px; height: 14px; }
.results .tra { width: 10px; height: 14px; }
.pane footer { margin-top: auto; padding-top: 8px; border-top: 1px solid #d0d0d0; }
```
